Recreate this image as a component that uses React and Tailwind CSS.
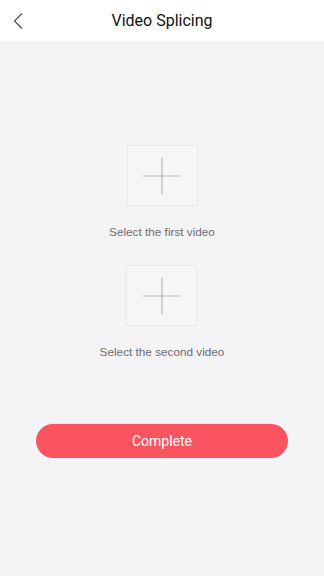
import React from 'react';

function AddBox({ label }) {
  return (
    <div className="flex flex-col items-center">
      <button className="w-[71px] h-[61px] border border-[#e9e8ec] bg-[#f6f5f8] flex items-center justify-center">
        <svg width="38" height="36" viewBox="0 0 38 36">
          <path d="M0 18H38M19 0V36" stroke="#b9b8bc" strokeWidth="1.2" fill="none" />
        </svg>
      </button>
      <p className="mt-[19px] text-[11.75px] leading-[14px] text-[#6e6d71] font-['Liberation_Sans',sans-serif]">{label}</p>
    </div>
  );
}

export default function App() {
  return (
    <div className="w-[324px] h-[576px] flex flex-col bg-[#f4f3f6]" style={{ fontFamily: 'Roboto, "Liberation Sans", sans-serif' }}>
      {/* Header */}
      <div className="h-[41px] bg-white flex items-center relative">
        <button className="absolute left-[12px] top-[12px] p-0" aria-label="Back">
          <svg width="12" height="18" viewBox="0 0 12 18">
            <path d="M10 1.5L2.5 9L10 16.5" stroke="#555" strokeWidth="1.3" fill="none" />
          </svg>
        </button>
        <p className="flex-1 text-center text-[16px] text-[#111]">Video Splicing</p>
      </div>

      {/* Pickers */}
      <div className="flex flex-col items-center pt-[104px] gap-[26px]">
        <AddBox label="Select the first video" />
        <AddBox label="Select the second video" />
      </div>

      <div className="px-[36px] mt-[65px]">
        <button className="w-full h-[34px] rounded-full bg-[#fa5461] text-white text-[14px]">
          Complete
        </button>
      </div>
    </div>
  );
}
